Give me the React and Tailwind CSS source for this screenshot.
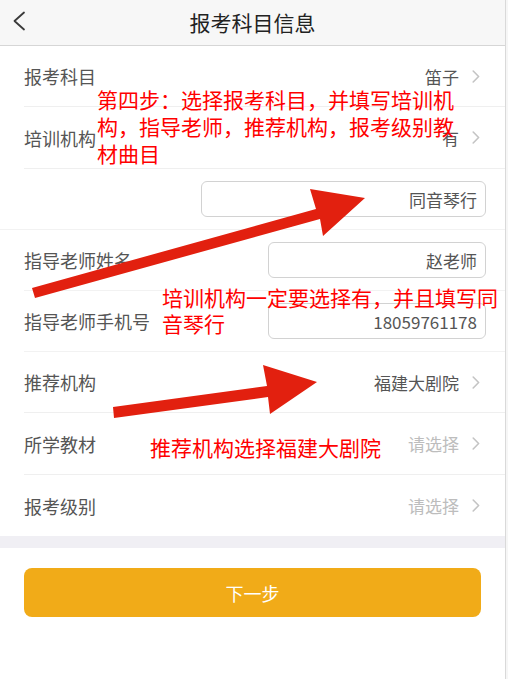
import React from "react";

const font = { fontFamily: '"Noto Sans CJK SC", "Noto Sans", sans-serif' };

function Chevron() {
  return (
    <svg width="8" height="13" viewBox="0 0 8 13" className="shrink-0">
      <path d="M1.2 1 L6.6 6.5 L1.2 12" fill="none" stroke="#c4c4c4" strokeWidth="1.6" strokeLinecap="round" strokeLinejoin="round" />
    </svg>
  );
}

function SelectRow({ label, value, placeholder, h = "h-[62px]", last }) {
  return (
    <div className={`ml-6 flex ${h} items-center justify-between pr-[25px] ${last ? "" : "border-b border-[#efefef]"}`}>
      <span className="text-[18px] leading-none text-[#555555]">{label}</span>
      <div className="flex items-center gap-[13px]">
        <span className={`text-[17px] leading-none ${placeholder ? "text-[#bdbdbd]" : "text-[#555555]"}`}>{value}</span>
        <Chevron />
      </div>
    </div>
  );
}

function InputRow({ label, value, boxW }) {
  return (
    <div className="ml-6 flex h-[61px] items-center justify-between border-b border-[#f2f2f2] pr-[19px]">
      <span className="text-[18px] leading-none text-[#555555]">{label}</span>
      <div className={`flex h-[36px] ${boxW} items-center justify-end rounded-[6px] border border-[#d2d2d2] pr-2`}>
        <span className="text-[17px] leading-none text-[#555555]">{value}</span>
      </div>
    </div>
  );
}

export default function App() {
  return (
    <div className="relative flex min-h-[679px] w-[508px] overflow-hidden bg-white" style={font}>
      <div className="flex w-[505px] flex-col">
        {/* header */}
        <div className="relative flex h-[46px] items-center justify-center border-b border-[#d6d6d6] bg-[#f7f7f7]">
          <svg width="14" height="20" viewBox="0 0 14 20" className="absolute left-[12px] top-[11px]">
            <path d="M12 1.5 L2.5 10 L12 18.5" fill="none" stroke="#3a3a3a" strokeWidth="1.8" strokeLinecap="round" strokeLinejoin="round" />
          </svg>
          <span className="text-[21px] leading-none text-[#222222]">报考科目信息</span>
        </div>

        {/* card */}
        <div className="flex flex-col bg-white">
          <SelectRow label="报考科目" value="笛子" h="h-[61px]" />
          <SelectRow label="培训机构" value="有" />
          <div className="flex h-[61px] items-center justify-end border-b border-[#f2f2f2] pr-[19px]">
            <div className="flex h-[36px] w-[285px] items-center justify-end rounded-[6px] border border-[#d2d2d2] pr-2">
              <span className="text-[17px] leading-none text-[#555555]">同音琴行</span>
            </div>
          </div>
          <InputRow label="指导老师姓名" value="赵老师" boxW="w-[218px]" />
          <InputRow label="指导老师手机号" value="18059761178" boxW="w-[218px]" />
          <SelectRow label="推荐机构" value="福建大剧院" h="h-[61px]" />
          <SelectRow label="所学教材" value="请选择" placeholder />
          <SelectRow label="报考级别" value="请选择" placeholder h="h-[61px]" last />
        </div>

        <div className="h-[12px] bg-[#f0eff4]" />

        <div className="bg-white px-6 pt-[20px]">
          <button className="flex h-[49px] w-full items-center justify-center rounded-[8px] bg-[#f1ab18]">
            <span className="text-[18px] leading-none text-white">下一步</span>
          </button>
        </div>
      </div>
      <div className="w-[3px] border-l border-[#d9d9d9] bg-[#f6f6f6]" />

      {/* annotations overlay */}
      <svg width="508" height="679" viewBox="0 0 508 679" className="pointer-events-none absolute left-0 top-0">
        <polygon points="32,288 316,209 310,189 365,198 323,236 320,219 35,298" fill="#e2200f" />
        <polygon points="113,407 267,386 263,365 317,382 270,414 268,397 114,418" fill="#e2200f" />
      </svg>
      <div className="pointer-events-none absolute left-[97px] top-[86px] w-[362px] text-[21px] leading-[27px] text-[#ff0000]">
        第四步：选择报考科目，并填写培训机构，指导老师，推荐机构，报考级别教材曲目
      </div>
      <div className="pointer-events-none absolute left-[162px] top-[284px] w-[340px] text-[21px] leading-[26px] text-[#ff0000]">
        培训机构一定要选择有，并且填写同音琴行
      </div>
      <div className="pointer-events-none absolute left-[150px] top-[434px] text-[21px] leading-[26px] text-[#ff0000]">
        推荐机构选择福建大剧院
      </div>
    </div>
  );
}
